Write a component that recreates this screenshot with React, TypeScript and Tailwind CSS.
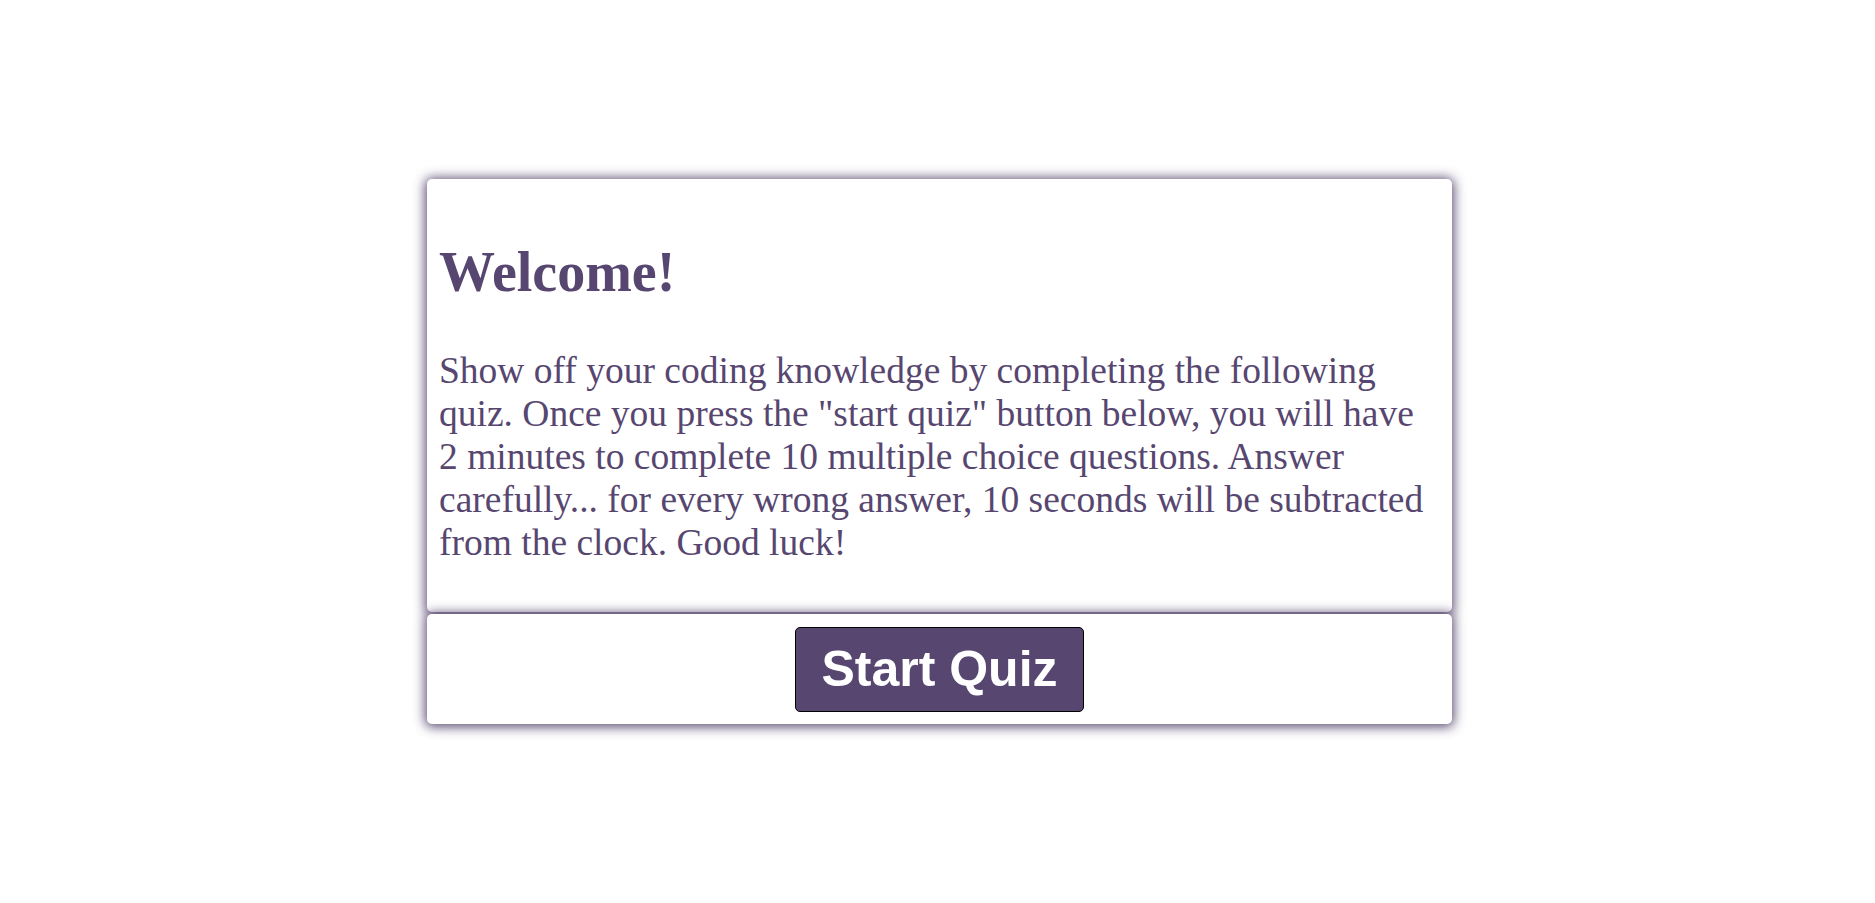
const App = () => {
  return (
    <div className="flex min-h-screen items-center justify-center bg-white font-['Liberation_Serif',serif] text-[#574770]">
      <div className="ml-[4px] flex w-[1025px] flex-col gap-[2px]">
        <section className="rounded-[5px] bg-white px-[12px] pt-[61px] pb-[48px] shadow-[0_1px_12px_2px_rgba(74,58,100,0.9)]">
          <h1 className="text-[56px] font-bold leading-[64px]">Welcome!</h1>
          <p className="mt-[45px] text-[37.5px] leading-[43px]">
            Show off your coding knowledge by completing the following quiz. Once you press the "start quiz" button below, you will have 2 minutes to complete 10 multiple choice questions. Answer carefully... for every wrong answer, 10 seconds will be subtracted from the clock. Good luck!
          </p>
        </section>
        <section className="flex justify-center rounded-[5px] bg-white pt-[13px] pb-[12px] shadow-[0_1px_12px_2px_rgba(74,58,100,0.9)]">
          <button className="h-[85px] rounded-[5px] border border-black bg-[#574770] px-[25px] font-['Liberation_Sans',sans-serif] text-[50px] font-bold text-white">
            Start Quiz
          </button>
        </section>
      </div>
    </div>
  );
};

export default App;
